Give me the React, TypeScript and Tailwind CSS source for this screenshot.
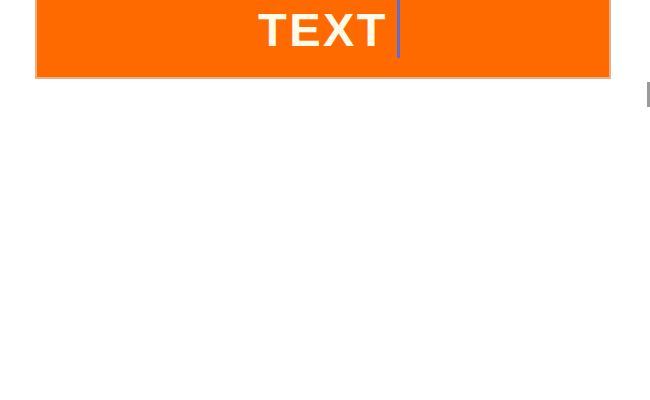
export default function App() {
  return (
    <div className="relative w-[650px] h-[400px] bg-white overflow-hidden" style={{ fontFamily: '"Liberation Sans", Arial, sans-serif' }}>
      <div className="ml-[35px] w-[576px] h-[79px] bg-[#ff6a00] border-l-2 border-r-2 border-b-2 border-[#e8b088] flex justify-center items-start">
        <span className="relative mt-[6px] text-[47px] leading-none font-bold text-[#fffbeb] tracking-[2.5px]">
          TEXT
          <span className="absolute left-full top-[-6px] ml-[9px] w-[3px] h-[58px] bg-[#5c6cd2]"></span>
        </span>
      </div>
      <div className="absolute left-[647px] top-[82px] w-[3px] h-[25px] bg-[#9a9a9a]"></div>
    </div>
  );
}
